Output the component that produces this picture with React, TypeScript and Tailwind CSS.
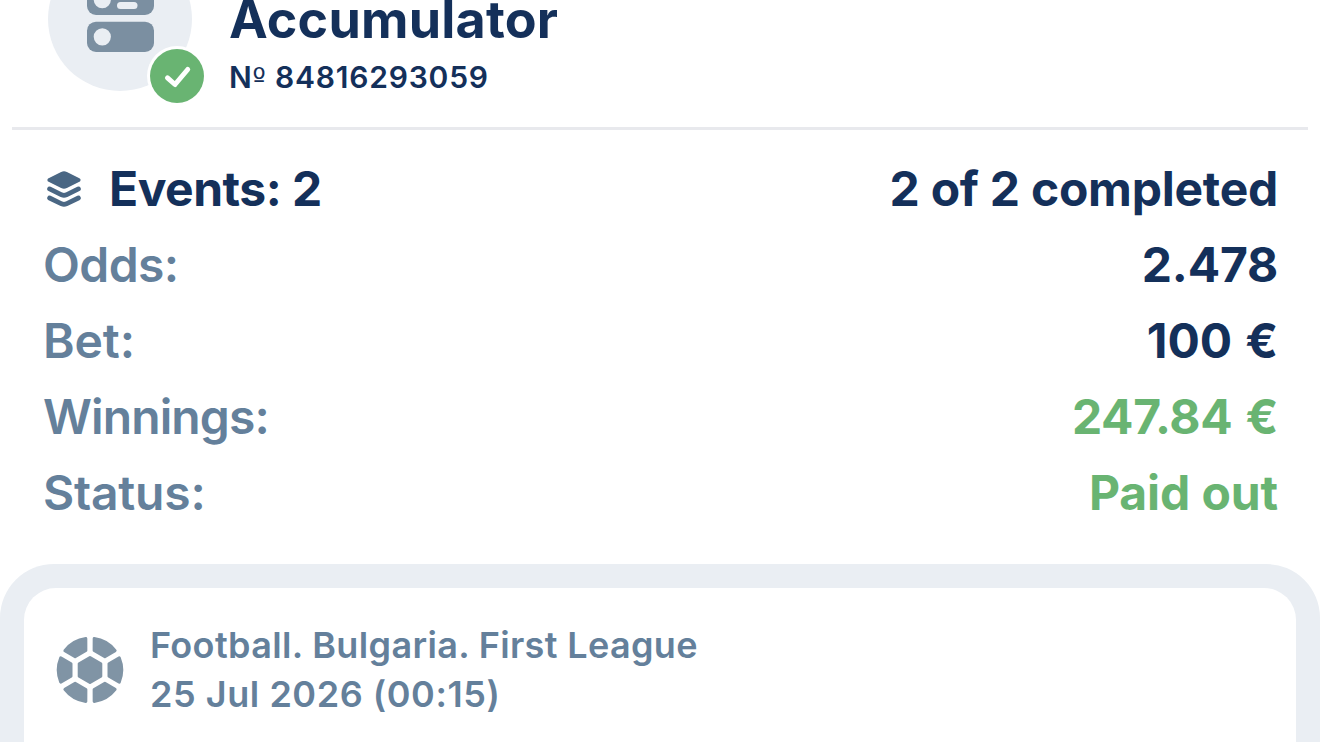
import React from 'react';
import clsx from 'clsx';

interface Row {
    label: string;
    value: string;
    labelClass: string;
    valueClass: string;
}

const rows: Row[] = [
    { label: 'Odds:', value: '2.478', labelClass: 'tracking-[-0.6px]', valueClass: 'tracking-[-0.2px] text-[#14305a]' },
    { label: 'Bet:', value: '100 €', labelClass: 'tracking-[-0.1px]', valueClass: 'tracking-[-0.1px] [word-spacing:2px] text-[#14305a]' },
    { label: 'Winnings:', value: '247.84 €', labelClass: 'tracking-[-0.9px]', valueClass: 'tracking-[-0.3px] [word-spacing:2px] text-[#69b472]' },
    { label: 'Status:', value: 'Paid out', labelClass: 'tracking-[-0.2px]', valueClass: 'tracking-[-0.1px] text-[#69b472]' },
];

const CouponIcon: React.FC = () => (
    <svg className="block" width="160" height="106" viewBox="0 0 160 106">
        <circle cx="72" cy="19" r="72" fill="#eaeef3" />
        <rect x="39" y="-15" width="67" height="30" rx="9" fill="#7b8fa1" />
        <rect x="39" y="21.7" width="67" height="30.3" rx="9" fill="#7b8fa1" />
        <circle cx="54.3" cy="-0.3" r="8.6" fill="#eaeef3" />
        <circle cx="54.3" cy="36.8" r="8.6" fill="#eaeef3" />
        <rect x="69" y="2" width="20.5" height="7" rx="3.5" fill="#eaeef3" />
        <circle cx="129" cy="76" r="30" fill="#fff" />
        <circle cx="129" cy="76" r="27" fill="#69b472" />
        <path
            d="M119.5 77.8 127 84.5 139.7 69.5"
            fill="none"
            stroke="#fff"
            strokeWidth="5"
            strokeLinecap="round"
            strokeLinejoin="round"
        />
    </svg>
);

const LayersIcon: React.FC = () => (
    <svg className="block" width="34" height="37" viewBox="0 0 34 37">
        <path
            d="M2.5 9 15 2.7Q17 1.8 19 2.7L31.5 9 19 15.3Q17 16.2 15 15.3Z"
            fill="#4a6784"
            stroke="#4a6784"
            strokeWidth="4"
            strokeLinejoin="round"
        />
        <g fill="none" stroke="#4a6784" strokeWidth="4.8" strokeLinecap="round">
            <path d="M2.6 17.9 14.6 23.8Q17 24.8 19.4 23.8L31.4 17.9" />
            <path d="M2.6 27 14.6 32.8Q17 33.8 19.4 32.8L31.4 27" />
        </g>
    </svg>
);

const FootballIcon: React.FC = () => (
    <svg className="block" width="68" height="68" viewBox="-34 -34 68 68">
        <g fill="#8094a5" stroke="#8094a5" strokeWidth="3" strokeLinejoin="round">
            <path d="M0-12.4 10.8-6.2V6.2L0 12.4-10.8 6.2V-6.2Z" />
            {[0, 60, 120, 180, 240, 300].map((angle) => (
                <path
                    key={angle}
                    transform={`rotate(${angle})`}
                    d="M19-6.2 29.3-12.1A31.7 31.7 0 0 1 29.3 12.1L19 6.2Z"
                />
            ))}
        </g>
    </svg>
);

const App: React.FC = () => {
    return (
        <div className="h-[742px] w-[1320px] overflow-hidden bg-white font-['Inter',sans-serif] whitespace-nowrap">
            <header className="mx-3 flex h-[130px] border-b-3 border-[#e8e9ed] pl-9">
                <CouponIcon />
                <div className="pl-[21px] text-[#14305a]">
                    <h1 className="h-[56px] text-[52px] leading-[39px] font-bold tracking-[0.2px]">Accumulator</h1>
                    <p className="text-[30px] leading-[42px] font-semibold tracking-[0.8px]">
                        N<span className="font-['DejaVu_Sans',sans-serif] text-[28px] leading-none font-normal">º</span> 84816293059
                    </p>
                </div>
            </header>

            <section className="flex flex-col pt-[21px] pr-[42px] pb-[33px] pl-[43px] text-[48px] leading-[76px] font-[680]">
                <div className="flex items-center justify-between text-[#14305a]">
                    <div className="flex items-center">
                        <span className="pl-[4px]">
                            <LayersIcon />
                        </span>
                        <span className="pl-[28px] tracking-[-0.5px]">Events: 2</span>
                    </div>
                    <span className="tracking-[-0.25px]">2 of 2 completed</span>
                </div>
                {rows.map((row) => (
                    <div key={row.label} className="flex justify-between">
                        <span className={clsx('font-[560] text-[#64809b]', row.labelClass)}>{row.label}</span>
                        <span className={row.valueClass}>{row.value}</span>
                    </div>
                ))}
            </section>

            <section className="h-[300px] rounded-t-[54px] bg-[#eaeef3] px-6 pt-6">
                <div className="flex h-full rounded-t-[32px] bg-white pt-[33px] pl-8">
                    <div className="pt-[15px]">
                        <FootballIcon />
                    </div>
                    <div className="pl-[26px] text-[36px] leading-[49px] font-[570] text-[#64809b]">
                        <p className="tracking-[0.35px]">Football. Bulgaria. First League</p>
                        <p className="tracking-[0.55px]">25 Jul 2026 (00:15)</p>
                    </div>
                </div>
            </section>
        </div>
    );
};

export default App;
